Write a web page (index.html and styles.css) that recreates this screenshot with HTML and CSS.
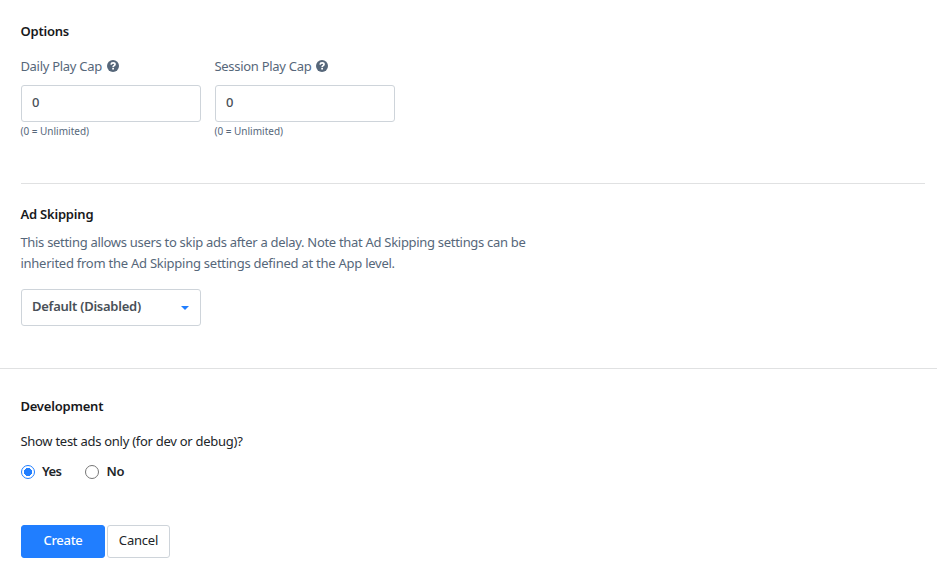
FILE: index.html
```html
<!DOCTYPE html>
<html lang="en">
<head>
<meta charset="utf-8">
<title>Placement settings</title>
<link rel="stylesheet" href="styles.css">
</head>
<body>
<form class="page">
  <section class="section options">
    <h2 class="title">Options</h2>
    <div class="fields">
      <div class="field">
        <label class="label" for="daily"><span class="label-text">Daily Play Cap</span>
          <svg class="help" viewBox="0 0 12 12"><circle cx="6" cy="6" r="6"/><path d="M4.1 4.6C4.2 3.4 5 2.9 6.1 2.9C7.2 2.9 8 3.5 8 4.4C8 5.7 6.2 5.5 6.1 7"/><rect x="5.2" y="7.8" width="1.8" height="1.7"/></svg>
        </label>
        <input class="input" id="daily" type="text" value="0">
        <span class="hint">(0 = Unlimited)</span>
      </div>
      <div class="field">
        <label class="label" for="session"><span class="label-text">Session Play Cap</span>
          <svg class="help" viewBox="0 0 12 12"><circle cx="6" cy="6" r="6"/><path d="M4.1 4.6C4.2 3.4 5 2.9 6.1 2.9C7.2 2.9 8 3.5 8 4.4C8 5.7 6.2 5.5 6.1 7"/><rect x="5.2" y="7.8" width="1.8" height="1.7"/></svg>
        </label>
        <input class="input" id="session" type="text" value="0">
        <span class="hint">(0 = Unlimited)</span>
      </div>
    </div>
  </section>
  <section class="section skipping">
    <h2 class="title">Ad Skipping</h2>
    <p class="description"><span class="line-first">This setting allows users to skip ads after a delay. Note that Ad Skipping settings can be</span><br><span class="line-second">inherited from the Ad Skipping settings defined at the App level.</span></p>
    <button class="select" type="button"><span>Default (Disabled)</span><svg class="caret" viewBox="0 0 8 4"><path d="M0 0H8L4 4Z"/></svg></button>
  </section>
  <section class="section development">
    <h2 class="title">Development</h2>
    <p class="question">Show test ads only (for dev or debug)?</p>
    <div class="radios">
      <label class="choice"><input class="radio" type="radio" name="test" checked><span>Yes</span></label>
      <label class="choice"><input class="radio" type="radio" name="test"><span>No</span></label>
    </div>
    <div class="actions">
      <button class="button primary" type="button">Create</button>
      <button class="button secondary" type="button">Cancel</button>
    </div>
  </section>
</form>
</body>
</html>
```
FILE: styles.css
```css
* { box-sizing: border-box; }
body {
  margin: 0;
  background: #fff;
  color: #212529;
  font-family: "Noto Sans", "Open Sans", sans-serif;
  font-size: 13px;
  line-height: 21px;
}
h2, p { margin: 0; }
button, input { font: inherit; }
.section { padding-left: 21px; }
.title, .description, .question, .hint, .label-text { margin-left: -0.6px; }
.title {
  color: #18191b;
  font-size: 13px;
  font-weight: 600;
  line-height: 21px;
  letter-spacing: -0.2px;
}
.options { height: 183px; padding-top: 21px; }
.fields { display: flex; gap: 14px; margin-top: 14px; }
.field { display: flex; flex-direction: column; width: 180px; }
.label {
  display: flex;
  align-items: center;
  gap: 5px;
  height: 21px;
  margin-bottom: 8px;
  color: #56677a;
  white-space: nowrap;
}
.label-text { letter-spacing: -0.29px; }
.help { width: 12px; height: 12px; margin-bottom: 1px; }
.help circle { fill: #56677a; }
.help path { fill: none; stroke: #fff; stroke-width: 1.7; }
.help rect { fill: #fff; }
.input {
  width: 180px;
  height: 37px;
  padding: 0 10px 3px;
  border: 1px solid #ced4da;
  border-radius: 3px;
  color: #495057;
  font-weight: 500;
}
.hint {
  margin-top: 1px;
  color: #56677a;
  font-size: 10px;
  line-height: 16px;
}
.skipping { height: 185px; padding-top: 21px; }
.skipping::before {
  display: block;
  width: 904px;
  height: 1px;
  margin: -21px 0 20px;
  background: #e0e1e2;
  content: "";
}
.description {
  margin-top: 7px;
  color: #56677a;
  white-space: nowrap;
}
.line-first { letter-spacing: -0.3px; }
.line-second { letter-spacing: -0.25px; }
.select {
  display: flex;
  align-items: center;
  justify-content: space-between;
  width: 180px;
  height: 37px;
  margin-top: 15px;
  padding: 0 11px 2px 10px;
  border: 1px solid #ced4da;
  border-radius: 3px;
  background: #fff;
  color: #495057;
  font-weight: 600;
  letter-spacing: -0.25px;
}
.caret { width: 8px; height: 4px; margin-top: 2px; fill: #207eff; }
.development { padding-top: 27px; border-top: 1px solid #e0e1e2; }
.question { margin-top: 14px; letter-spacing: -0.27px; }
.radios { display: flex; gap: 24px; margin-top: 9px; }
.choice {
  display: flex;
  align-items: center;
  gap: 7px;
  height: 21px;
  font-weight: 600;
  letter-spacing: -0.6px;
}
.choice + .choice { letter-spacing: -0.2px; }
.radio {
  width: 14px;
  height: 14px;
  margin: 1px 0 0;
  border: 1px solid #767676;
  border-radius: 50%;
  appearance: none;
  background: #fff;
}
.radio:checked {
  border-color: #207eff;
  background: radial-gradient(circle, #207eff 0 3.8px, #fff 4.3px);
}
.actions { display: flex; gap: 2px; margin-top: 43px; }
.button {
  height: 33px;
  padding: 0 0 2px;
  border-radius: 3px;
  letter-spacing: -0.2px;
}
.primary {
  width: 84px;
  border: 1px solid #207eff;
  background: #207eff;
  color: #fff;
  font-weight: 500;
  letter-spacing: -0.3px;
}
.secondary {
  width: 63px;
  border: 1px solid #ced4da;
  background: #fff;
  color: #212529;
}
```
